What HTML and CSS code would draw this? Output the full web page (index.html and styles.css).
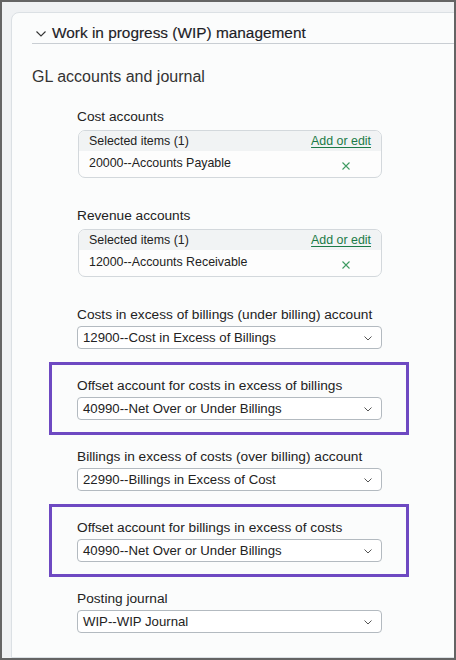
FILE: index.html
```html
<!DOCTYPE html>
<html lang="en">
<head>
<meta charset="utf-8">
<title>WIP management</title>
<link rel="stylesheet" href="styles.css">
</head>
<body>
<div class="frame">
  <div class="card">
    <div class="section-head">
      <svg class="head-chevron" width="10" height="6" viewBox="0 0 10 6"><path d="M0.5 0.5 L5 5 L9.5 0.5" fill="none" stroke="#333" stroke-width="1.1"/></svg>
      <h2 class="section-title">Work in progress (WIP) management</h2>
    </div>
    <h3 class="sub-title">GL accounts and journal</h3>
    <div class="fields">
      <div class="field">
        <div class="label label-multi">Cost accounts</div>
        <div class="multi">
          <div class="multi-head"><span>Selected items (1)</span><a class="link" href="#">Add or edit</a></div>
          <div class="multi-row"><span>20000--Accounts Payable</span><svg class="remove" width="8" height="8" viewBox="0 0 8 8"><path d="M0.5 0.5 L7.5 7.5 M7.5 0.5 L0.5 7.5" stroke="#3f9b62" stroke-width="1.1"/></svg></div>
        </div>
      </div>
      <div class="field gap-lg">
        <div class="label label-multi">Revenue accounts</div>
        <div class="multi">
          <div class="multi-head"><span>Selected items (1)</span><a class="link" href="#">Add or edit</a></div>
          <div class="multi-row"><span>12000--Accounts Receivable</span><svg class="remove" width="8" height="8" viewBox="0 0 8 8"><path d="M0.5 0.5 L7.5 7.5 M7.5 0.5 L0.5 7.5" stroke="#3f9b62" stroke-width="1.1"/></svg></div>
        </div>
      </div>
      <div class="field gap-lg">
        <div class="label">Costs in excess of billings (under billing) account</div>
        <div class="select"><span>12900--Cost in Excess of Billings</span><svg width="8" height="5" viewBox="0 0 8 5"><path d="M0.5 0.5 L4 4 L7.5 0.5" fill="none" stroke="#555" stroke-width="1"/></svg></div>
      </div>
      <div class="highlight">
        <div class="field">
          <div class="label">Offset account for costs in excess of billings</div>
          <div class="select"><span>40990--Net Over or Under Billings</span><svg width="8" height="5" viewBox="0 0 8 5"><path d="M0.5 0.5 L4 4 L7.5 0.5" fill="none" stroke="#555" stroke-width="1"/></svg></div>
        </div>
      </div>
      <div class="field gap-sm">
        <div class="label">Billings in excess of costs (over billing) account</div>
        <div class="select"><span>22990--Billings in Excess of Cost</span><svg width="8" height="5" viewBox="0 0 8 5"><path d="M0.5 0.5 L4 4 L7.5 0.5" fill="none" stroke="#555" stroke-width="1"/></svg></div>
      </div>
      <div class="highlight">
        <div class="field">
          <div class="label">Offset account for billings in excess of costs</div>
          <div class="select"><span>40990--Net Over or Under Billings</span><svg width="8" height="5" viewBox="0 0 8 5"><path d="M0.5 0.5 L4 4 L7.5 0.5" fill="none" stroke="#555" stroke-width="1"/></svg></div>
        </div>
      </div>
      <div class="field gap-sm">
        <div class="label">Posting journal</div>
        <div class="select"><span>WIP--WIP Journal</span><svg width="8" height="5" viewBox="0 0 8 5"><path d="M0.5 0.5 L4 4 L7.5 0.5" fill="none" stroke="#555" stroke-width="1"/></svg></div>
      </div>
    </div>
  </div>
</div>
</body>
</html>
```

FILE: styles.css
```css
* { box-sizing: border-box; }
html, body { margin: 0; padding: 0; }
body {
  font-family: "Liberation Sans", Arial, sans-serif;
  color: #222;
  background: #eff1f3;
}
.frame {
  width: 456px;
  height: 660px;
  border: 2px solid #646464;
  background: #eff1f3;
  padding: 10px 0 0 9px;
  overflow: hidden;
}
.card {
  height: 100%;
  margin-right: -20px;
  background: #fbfcfc;
  border: 1px solid #dbe0e4;
  border-radius: 8px 0 0 0;
  padding-left: 20px;
}
.section-head {
  display: flex;
  align-items: center;
  gap: 6px;
  padding: 10px 0 0 4px;
  border-bottom: 1px solid #c9ced3;
}
.head-chevron { flex: none; margin-top: 2px; }
.section-title {
  margin: 0;
  font-size: 15.4px;
  line-height: 20px;
  font-weight: normal;
  color: #1d2126;
  -webkit-text-stroke: 0.15px #1d2126;
}
.sub-title {
  margin: 23px 0 0;
  font-size: 16px;
  line-height: 20px;
  font-weight: normal;
  color: #333;
}
.fields {
  padding: 22px 0 0 45px;
}
.field { width: 305px; }
.label {
  font-size: 13.7px;
  line-height: 16px;
  color: #222;
  margin-bottom: 3px;
  white-space: nowrap;
}
.label.label-multi { margin-bottom: 5px; }
.gap-lg { margin-top: 30px; }
.gap-sm { margin-top: 14px; }
.multi {
  margin-left: 1px;
  height: 48px;
  border: 1px solid #d3d8dc;
  border-radius: 7px;
  overflow: hidden;
  background: #fdfdfd;
  font-size: 12.4px;
  color: #222;
}
.multi-head {
  height: 20px;
  background: #f1f3f4;
  display: flex;
  align-items: center;
  justify-content: space-between;
  padding: 0 10px;
}
.link {
  color: #1b7a47;
  text-decoration: underline;
  text-underline-offset: 2px;
}
.multi-row {
  display: flex;
  justify-content: space-between;
  align-items: flex-start;
  padding: 4px 31px 0 10px;
  line-height: 16px;
}
.remove { margin-top: 7px; flex: none; }
.select {
  height: 23px;
  border: 1px solid #b3bac0;
  border-radius: 4px;
  background: #fff;
  display: flex;
  align-items: center;
  justify-content: space-between;
  padding: 0 9px 0 5px;
  font-size: 13.2px;
  color: #222;
}
.select svg { flex: none; margin-top: 1px; }
.highlight {
  margin: 13px 0 0 -28px;
  width: 360px;
  border: 3px solid #6e49c2;
  padding: 13px 24px 12px 25px;
}
```
